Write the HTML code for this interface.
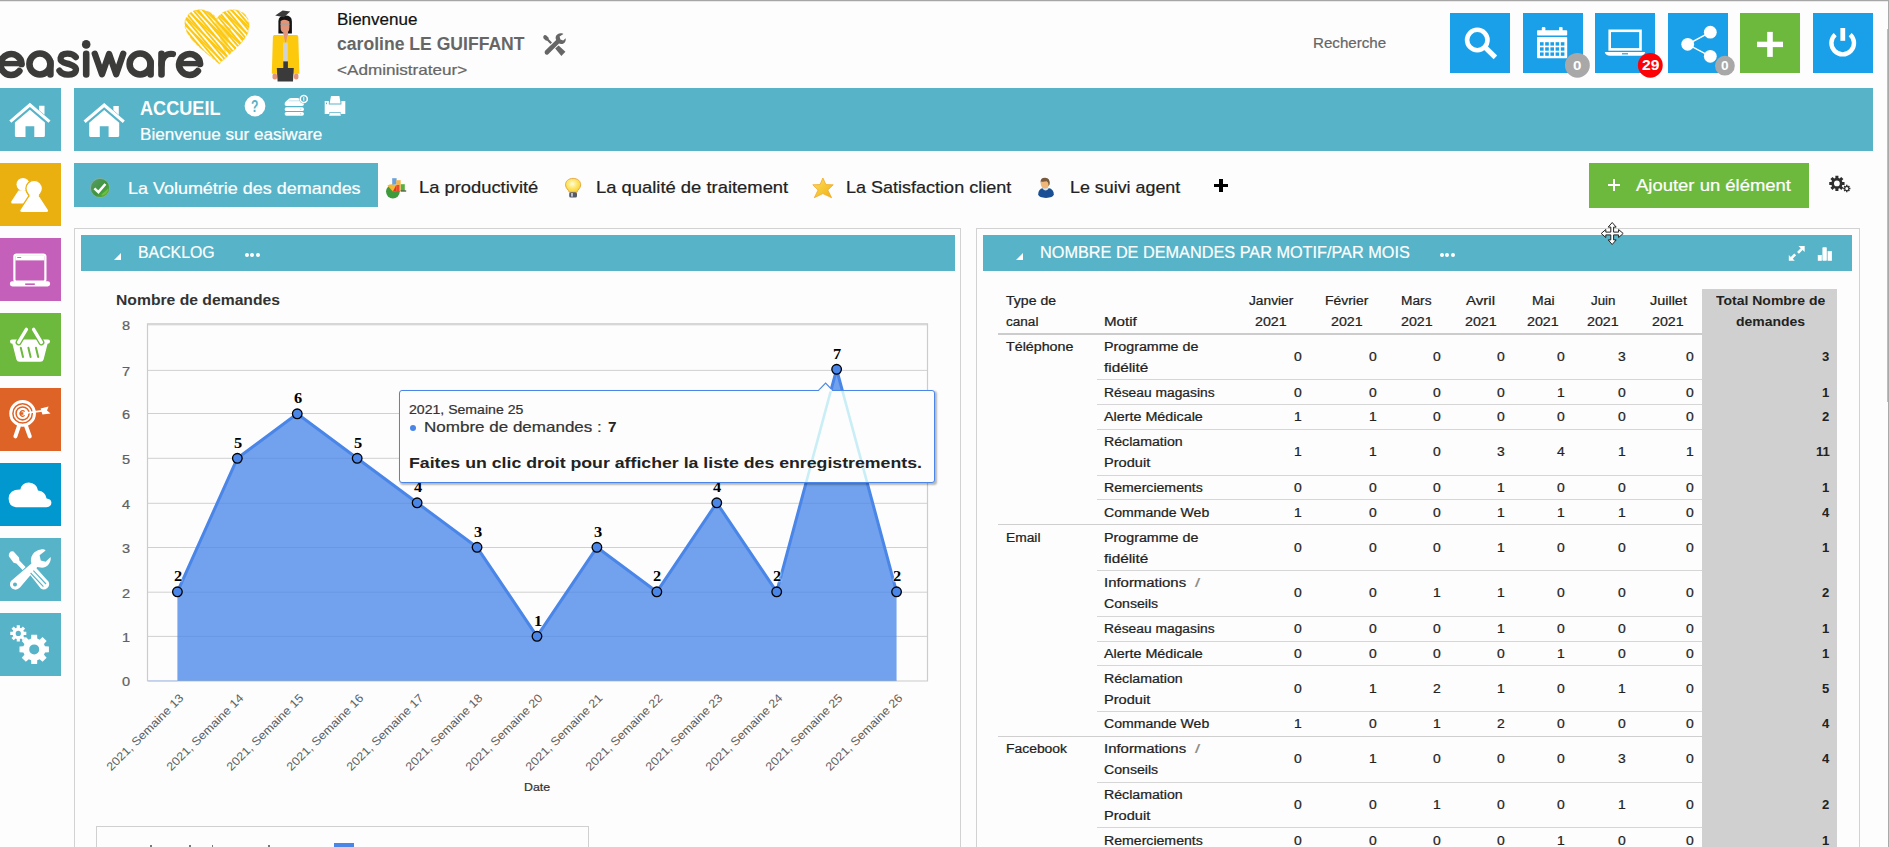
<!DOCTYPE html>
<html><head><meta charset="utf-8"><title>easiware</title>
<style>
html,body{margin:0;padding:0;width:1889px;height:847px;overflow:hidden;}
body{position:relative;background:#fdfdfd;font-family:"Liberation Sans",sans-serif;}
#root{position:absolute;left:0;top:0;width:1889px;height:847px;overflow:hidden;background:#fdfdfd;}
.t{position:absolute;white-space:nowrap;display:block;transform-origin:0 0;}
.b{position:absolute;}
svg{position:absolute;overflow:visible;}
</style></head><body><div id="root">
<div class="b" style="left:0.00px;top:0.00px;width:1889.00px;height:1.00px;background:#a6a6a6;"></div>
<div class="b" style="left:0.00px;top:1.00px;width:1889.00px;height:1.00px;background:#e9e9e9;"></div>
<div class="b" style="left:1887.50px;top:0.00px;width:0.50px;height:847.00px;background:#e2e2e2;"></div>
<div class="b" style="left:1888.00px;top:0.00px;width:1.00px;height:847.00px;background:#a9a9a9;"></div>
<div class="b" style="left:1886.60px;top:29.00px;width:0.80px;height:372.70px;background:#d4d4d4;"></div>
<div class="b" style="left:1887.00px;top:29.00px;width:1.00px;height:372.70px;background:#bdbdbd;"></div>
<span class="t" style="left:337.00px;top:10.00px;font-size:16.20px;line-height:18.00px;color:#111;font-weight:normal;font-family:'Liberation Sans';transform:scaleX(1.0514);-webkit-text-stroke:0.22px #111;">Bienvenue</span>
<span class="t" style="left:337.00px;top:34.00px;font-size:17.60px;line-height:20.00px;color:#666;font-weight:bold;font-family:'Liberation Sans';transform:scaleX(0.9992);">caroline LE GUIFFANT</span>
<span class="t" style="left:337.00px;top:62.00px;font-size:14.60px;line-height:16.00px;color:#666;font-weight:normal;font-family:'Liberation Sans';transform:scaleX(1.1720);-webkit-text-stroke:0.22px #666;">&lt;Administrateur&gt;</span>
<span class="t" style="left:1313.30px;top:34.00px;font-size:15.50px;line-height:17.00px;color:#666;font-weight:normal;font-family:'Liberation Sans';transform:scaleX(0.9765);-webkit-text-stroke:0.22px #666;">Recherche</span>
<div class="b" style="left:1450.00px;top:13.00px;width:60.00px;height:59.80px;background:#1aa0e8;"></div>
<div class="b" style="left:1523.00px;top:13.00px;width:60.00px;height:59.80px;background:#1aa0e8;"></div>
<div class="b" style="left:1595.00px;top:13.00px;width:60.00px;height:59.80px;background:#1aa0e8;"></div>
<div class="b" style="left:1668.00px;top:13.00px;width:60.00px;height:59.80px;background:#1aa0e8;"></div>
<div class="b" style="left:1740.00px;top:13.00px;width:60.00px;height:59.80px;background:#6cb93d;"></div>
<div class="b" style="left:1813.00px;top:13.00px;width:60.00px;height:59.80px;background:#1aa0e8;"></div>
<div class="b" style="left:0.00px;top:88.00px;width:61.00px;height:62.70px;background:#56b3c8;"></div>
<div class="b" style="left:0.00px;top:163.00px;width:61.00px;height:62.70px;background:#eab010;"></div>
<div class="b" style="left:0.00px;top:238.00px;width:61.00px;height:62.70px;background:#c45fba;"></div>
<div class="b" style="left:0.00px;top:313.00px;width:61.00px;height:62.70px;background:#6cb93d;"></div>
<div class="b" style="left:0.00px;top:388.00px;width:61.00px;height:62.70px;background:#dd6326;"></div>
<div class="b" style="left:0.00px;top:463.00px;width:61.00px;height:62.70px;background:#0098cf;"></div>
<div class="b" style="left:0.00px;top:538.00px;width:61.00px;height:62.70px;background:#56b3c8;"></div>
<div class="b" style="left:0.00px;top:613.00px;width:61.00px;height:62.70px;background:#56b3c8;"></div>
<div class="b" style="left:74.00px;top:88.00px;width:1799.00px;height:62.60px;background:#56b3c8;"></div>
<span class="t" style="left:140.30px;top:97.00px;font-size:19.50px;line-height:22.00px;color:#fff;font-weight:bold;font-family:'Liberation Sans';transform:scaleX(0.9288);">ACCUEIL</span>
<span class="t" style="left:140.30px;top:125.00px;font-size:16.20px;line-height:18.00px;color:#fff;font-weight:normal;font-family:'Liberation Sans';transform:scaleX(1.0555);-webkit-text-stroke:0.22px #fff;">Bienvenue sur easiware</span>
<div class="b" style="left:74.00px;top:163.00px;width:303.80px;height:43.70px;background:#56b3c8;"></div>
<span class="t" style="left:128.40px;top:179.00px;font-size:17.00px;line-height:19.00px;color:#fff;font-weight:normal;font-family:'Liberation Sans';transform:scaleX(1.0563);-webkit-text-stroke:0.22px #fff;">La Volumétrie des demandes</span>
<span class="t" style="left:418.90px;top:178.00px;font-size:17.00px;line-height:19.00px;color:#222;font-weight:normal;font-family:'Liberation Sans';transform:scaleX(1.0790);-webkit-text-stroke:0.22px #222;">La productivité</span>
<span class="t" style="left:596.40px;top:178.00px;font-size:17.00px;line-height:19.00px;color:#222;font-weight:normal;font-family:'Liberation Sans';transform:scaleX(1.0818);-webkit-text-stroke:0.22px #222;">La qualité de traitement</span>
<span class="t" style="left:846.10px;top:178.00px;font-size:17.00px;line-height:19.00px;color:#222;font-weight:normal;font-family:'Liberation Sans';transform:scaleX(1.0595);-webkit-text-stroke:0.22px #222;">La Satisfaction client</span>
<span class="t" style="left:1069.50px;top:178.00px;font-size:17.00px;line-height:19.00px;color:#222;font-weight:normal;font-family:'Liberation Sans';transform:scaleX(1.0505);-webkit-text-stroke:0.22px #222;">Le suivi agent</span>
<div class="b" style="left:1213.50px;top:183.50px;width:14.50px;height:3.50px;background:#000;"></div>
<div class="b" style="left:1219.00px;top:178.50px;width:3.50px;height:13.50px;background:#000;"></div>
<div class="b" style="left:1589.00px;top:163.00px;width:220.00px;height:45.00px;background:#6cb93d;"></div>
<div class="b" style="left:1607.50px;top:184.00px;width:12.70px;height:2.40px;background:#fff;"></div>
<div class="b" style="left:1612.70px;top:179.10px;width:2.40px;height:12.20px;background:#fff;"></div>
<span class="t" style="left:1635.90px;top:176.00px;font-size:17.00px;line-height:19.00px;color:#fff;font-weight:normal;font-family:'Liberation Sans';transform:scaleX(1.0862);-webkit-text-stroke:0.22px #fff;">Ajouter un élément</span>
<div class="b" style="left:74px;top:228px;width:886.5px;height:640px;border:1px solid #d2d2d2;box-sizing:border-box;"></div>
<div class="b" style="left:976px;top:228px;width:884px;height:640px;border:1px solid #d2d2d2;box-sizing:border-box;"></div>
<div class="b" style="left:81.00px;top:235.00px;width:874.00px;height:35.70px;background:#56b3c8;"></div>
<div class="b" style="left:983.00px;top:235.00px;width:869.00px;height:35.70px;background:#56b3c8;"></div>
<span class="t" style="left:137.80px;top:243.00px;font-size:16.50px;line-height:18.00px;color:#fff;font-weight:normal;font-family:'Liberation Sans';transform:scaleX(0.9614);-webkit-text-stroke:0.22px #fff;">BACKLOG</span>
<span class="t" style="left:1040.20px;top:243.00px;font-size:16.50px;line-height:18.00px;color:#fff;font-weight:normal;font-family:'Liberation Sans';transform:scaleX(0.9854);-webkit-text-stroke:0.22px #fff;">NOMBRE DE DEMANDES PAR MOTIF/PAR MOIS</span>
<svg style="left:114.4px;top:253.2px" width="7" height="7"><path d="M7 0V7H0Z" fill="#fff"/></svg>
<svg style="left:1016.3px;top:253.2px" width="7" height="7"><path d="M7 0V7H0Z" fill="#fff"/></svg>
<div class="b" style="left:244.60px;top:252.9px;width:4.2px;height:4.2px;border-radius:50%;background:#fff"></div>
<div class="b" style="left:250.20px;top:252.9px;width:4.2px;height:4.2px;border-radius:50%;background:#fff"></div>
<div class="b" style="left:255.80px;top:252.9px;width:4.2px;height:4.2px;border-radius:50%;background:#fff"></div>
<div class="b" style="left:1439.70px;top:252.9px;width:4.2px;height:4.2px;border-radius:50%;background:#fff"></div>
<div class="b" style="left:1445.30px;top:252.9px;width:4.2px;height:4.2px;border-radius:50%;background:#fff"></div>
<div class="b" style="left:1450.90px;top:252.9px;width:4.2px;height:4.2px;border-radius:50%;background:#fff"></div>
<span class="t" style="left:115.70px;top:291.00px;font-size:15.00px;line-height:17.00px;color:#333;font-weight:bold;font-family:'Liberation Sans';transform:scaleX(1.0465);">Nombre de demandes</span>
<svg style="left:0;top:0" width="1889" height="847" viewBox="0 0 1889 847"><line x1="147.5" x2="927.5" y1="680.80" y2="680.80" stroke="#d0d0d0" stroke-width="1"/><line x1="147.5" x2="927.5" y1="636.40" y2="636.40" stroke="#d0d0d0" stroke-width="1"/><line x1="147.5" x2="927.5" y1="592.20" y2="592.20" stroke="#d0d0d0" stroke-width="1"/><line x1="147.5" x2="927.5" y1="547.50" y2="547.50" stroke="#d0d0d0" stroke-width="1"/><line x1="147.5" x2="927.5" y1="503.30" y2="503.30" stroke="#d0d0d0" stroke-width="1"/><line x1="147.5" x2="927.5" y1="458.30" y2="458.30" stroke="#d0d0d0" stroke-width="1"/><line x1="147.5" x2="927.5" y1="413.50" y2="413.50" stroke="#d0d0d0" stroke-width="1"/><line x1="147.5" x2="927.5" y1="370.40" y2="370.40" stroke="#d0d0d0" stroke-width="1"/><line x1="147.5" x2="927.5" y1="324.80" y2="324.80" stroke="#d0d0d0" stroke-width="1"/><rect x="147.5" y="323.8" width="780.0" height="357.0" fill="none" stroke="#cccccc" stroke-width="1.2"/><line x1="148.3" x2="177.4" y1="680.90" y2="680.90" stroke="#c3d2f0" stroke-width="1.6"/><line x1="896.6" x2="926.9" y1="680.90" y2="680.90" stroke="#e6e6e6" stroke-width="1.6"/><path d="M177.40 680.80 L177.40 591.80 L237.33 458.30 L297.26 413.80 L357.19 458.30 L417.12 502.80 L477.05 547.30 L536.98 636.30 L596.91 547.30 L656.84 591.80 L716.77 502.80 L776.70 591.80 L836.63 369.30 L896.56 591.80 L896.56 680.80 Z" fill="#4a86e8" fill-opacity="0.78"/><path d="M177.40 591.80 L237.33 458.30 L297.26 413.80 L357.19 458.30 L417.12 502.80 L477.05 547.30 L536.98 636.30 L596.91 547.30 L656.84 591.80 L716.77 502.80 L776.70 591.80 L836.63 369.30 L896.56 591.80" fill="none" stroke="#4a86e8" stroke-width="3" stroke-linejoin="round"/><circle cx="177.40" cy="591.80" r="4.8" fill="#4a86e8" stroke="#000" stroke-width="1.3"/><circle cx="237.33" cy="458.30" r="4.8" fill="#4a86e8" stroke="#000" stroke-width="1.3"/><circle cx="297.26" cy="413.80" r="4.8" fill="#4a86e8" stroke="#000" stroke-width="1.3"/><circle cx="357.19" cy="458.30" r="4.8" fill="#4a86e8" stroke="#000" stroke-width="1.3"/><circle cx="417.12" cy="502.80" r="4.8" fill="#4a86e8" stroke="#000" stroke-width="1.3"/><circle cx="477.05" cy="547.30" r="4.8" fill="#4a86e8" stroke="#000" stroke-width="1.3"/><circle cx="536.98" cy="636.30" r="4.8" fill="#4a86e8" stroke="#000" stroke-width="1.3"/><circle cx="596.91" cy="547.30" r="4.8" fill="#4a86e8" stroke="#000" stroke-width="1.3"/><circle cx="656.84" cy="591.80" r="4.8" fill="#4a86e8" stroke="#000" stroke-width="1.3"/><circle cx="716.77" cy="502.80" r="4.8" fill="#4a86e8" stroke="#000" stroke-width="1.3"/><circle cx="776.70" cy="591.80" r="4.8" fill="#4a86e8" stroke="#000" stroke-width="1.3"/><circle cx="836.63" cy="369.30" r="4.8" fill="#4a86e8" stroke="#000" stroke-width="1.3"/><circle cx="896.56" cy="591.80" r="4.8" fill="#4a86e8" stroke="#000" stroke-width="1.3"/></svg>
<span class="t" style="left:121.50px;top:674.00px;font-size:13.20px;line-height:15.00px;color:#606060;font-weight:normal;font-family:'Liberation Sans';transform:scaleX(1.1033);-webkit-text-stroke:0.22px #606060;">0</span>
<span class="t" style="left:121.50px;top:630.00px;font-size:13.20px;line-height:15.00px;color:#606060;font-weight:normal;font-family:'Liberation Sans';transform:scaleX(1.1033);-webkit-text-stroke:0.22px #606060;">1</span>
<span class="t" style="left:121.50px;top:586.00px;font-size:13.20px;line-height:15.00px;color:#606060;font-weight:normal;font-family:'Liberation Sans';transform:scaleX(1.1033);-webkit-text-stroke:0.22px #606060;">2</span>
<span class="t" style="left:121.50px;top:541.00px;font-size:13.20px;line-height:15.00px;color:#606060;font-weight:normal;font-family:'Liberation Sans';transform:scaleX(1.1033);-webkit-text-stroke:0.22px #606060;">3</span>
<span class="t" style="left:121.50px;top:497.00px;font-size:13.20px;line-height:15.00px;color:#606060;font-weight:normal;font-family:'Liberation Sans';transform:scaleX(1.1033);-webkit-text-stroke:0.22px #606060;">4</span>
<span class="t" style="left:121.50px;top:452.00px;font-size:13.20px;line-height:15.00px;color:#606060;font-weight:normal;font-family:'Liberation Sans';transform:scaleX(1.1033);-webkit-text-stroke:0.22px #606060;">5</span>
<span class="t" style="left:121.50px;top:407.00px;font-size:13.20px;line-height:15.00px;color:#606060;font-weight:normal;font-family:'Liberation Sans';transform:scaleX(1.1033);-webkit-text-stroke:0.22px #606060;">6</span>
<span class="t" style="left:121.50px;top:364.00px;font-size:13.20px;line-height:15.00px;color:#606060;font-weight:normal;font-family:'Liberation Sans';transform:scaleX(1.1033);-webkit-text-stroke:0.22px #606060;">7</span>
<span class="t" style="left:121.50px;top:318.00px;font-size:13.20px;line-height:15.00px;color:#606060;font-weight:normal;font-family:'Liberation Sans';transform:scaleX(1.1033);-webkit-text-stroke:0.22px #606060;">8</span>
<span class="t" style="left:174.00px;top:568.00px;font-size:14.40px;line-height:16.00px;color:#000;font-weight:bold;font-family:'Liberation Serif';transform:scaleX(1.1389);text-shadow:0 0 2px #fff,0 0 2px #fff,0 0 1px #fff;">2</span>
<span class="t" style="left:233.93px;top:435.00px;font-size:14.40px;line-height:16.00px;color:#000;font-weight:bold;font-family:'Liberation Serif';transform:scaleX(1.1389);text-shadow:0 0 2px #fff,0 0 2px #fff,0 0 1px #fff;">5</span>
<span class="t" style="left:293.86px;top:390.00px;font-size:14.40px;line-height:16.00px;color:#000;font-weight:bold;font-family:'Liberation Serif';transform:scaleX(1.1389);text-shadow:0 0 2px #fff,0 0 2px #fff,0 0 1px #fff;">6</span>
<span class="t" style="left:353.79px;top:435.00px;font-size:14.40px;line-height:16.00px;color:#000;font-weight:bold;font-family:'Liberation Serif';transform:scaleX(1.1389);text-shadow:0 0 2px #fff,0 0 2px #fff,0 0 1px #fff;">5</span>
<span class="t" style="left:413.72px;top:479.00px;font-size:14.40px;line-height:16.00px;color:#000;font-weight:bold;font-family:'Liberation Serif';transform:scaleX(1.1389);text-shadow:0 0 2px #fff,0 0 2px #fff,0 0 1px #fff;">4</span>
<span class="t" style="left:473.65px;top:524.00px;font-size:14.40px;line-height:16.00px;color:#000;font-weight:bold;font-family:'Liberation Serif';transform:scaleX(1.1389);text-shadow:0 0 2px #fff,0 0 2px #fff,0 0 1px #fff;">3</span>
<span class="t" style="left:533.58px;top:613.00px;font-size:14.40px;line-height:16.00px;color:#000;font-weight:bold;font-family:'Liberation Serif';transform:scaleX(1.1389);text-shadow:0 0 2px #fff,0 0 2px #fff,0 0 1px #fff;">1</span>
<span class="t" style="left:593.51px;top:524.00px;font-size:14.40px;line-height:16.00px;color:#000;font-weight:bold;font-family:'Liberation Serif';transform:scaleX(1.1389);text-shadow:0 0 2px #fff,0 0 2px #fff,0 0 1px #fff;">3</span>
<span class="t" style="left:653.44px;top:568.00px;font-size:14.40px;line-height:16.00px;color:#000;font-weight:bold;font-family:'Liberation Serif';transform:scaleX(1.1389);text-shadow:0 0 2px #fff,0 0 2px #fff,0 0 1px #fff;">2</span>
<span class="t" style="left:713.37px;top:479.00px;font-size:14.40px;line-height:16.00px;color:#000;font-weight:bold;font-family:'Liberation Serif';transform:scaleX(1.1389);text-shadow:0 0 2px #fff,0 0 2px #fff,0 0 1px #fff;">4</span>
<span class="t" style="left:773.30px;top:568.00px;font-size:14.40px;line-height:16.00px;color:#000;font-weight:bold;font-family:'Liberation Serif';transform:scaleX(1.1389);text-shadow:0 0 2px #fff,0 0 2px #fff,0 0 1px #fff;">2</span>
<span class="t" style="left:833.23px;top:346.00px;font-size:14.40px;line-height:16.00px;color:#000;font-weight:bold;font-family:'Liberation Serif';transform:scaleX(1.1389);text-shadow:0 0 2px #fff,0 0 2px #fff,0 0 1px #fff;">7</span>
<span class="t" style="left:893.16px;top:568.00px;font-size:14.40px;line-height:16.00px;color:#000;font-weight:bold;font-family:'Liberation Serif';transform:scaleX(1.1389);text-shadow:0 0 2px #fff,0 0 2px #fff,0 0 1px #fff;">2</span>
<span class="t" style="left:86.84px;top:690.20px;font-size:11.60px;line-height:11.60px;color:#606060;width:94.16px;transform-origin:100% 50%;transform:rotate(-45deg) scaleX(1.0939);text-align:right;">2021, Semaine 13</span>
<span class="t" style="left:146.77px;top:690.20px;font-size:11.60px;line-height:11.60px;color:#606060;width:94.16px;transform-origin:100% 50%;transform:rotate(-45deg) scaleX(1.0939);text-align:right;">2021, Semaine 14</span>
<span class="t" style="left:206.70px;top:690.20px;font-size:11.60px;line-height:11.60px;color:#606060;width:94.16px;transform-origin:100% 50%;transform:rotate(-45deg) scaleX(1.0939);text-align:right;">2021, Semaine 15</span>
<span class="t" style="left:266.63px;top:690.20px;font-size:11.60px;line-height:11.60px;color:#606060;width:94.16px;transform-origin:100% 50%;transform:rotate(-45deg) scaleX(1.0939);text-align:right;">2021, Semaine 16</span>
<span class="t" style="left:326.56px;top:690.20px;font-size:11.60px;line-height:11.60px;color:#606060;width:94.16px;transform-origin:100% 50%;transform:rotate(-45deg) scaleX(1.0939);text-align:right;">2021, Semaine 17</span>
<span class="t" style="left:386.49px;top:690.20px;font-size:11.60px;line-height:11.60px;color:#606060;width:94.16px;transform-origin:100% 50%;transform:rotate(-45deg) scaleX(1.0939);text-align:right;">2021, Semaine 18</span>
<span class="t" style="left:446.42px;top:690.20px;font-size:11.60px;line-height:11.60px;color:#606060;width:94.16px;transform-origin:100% 50%;transform:rotate(-45deg) scaleX(1.0939);text-align:right;">2021, Semaine 20</span>
<span class="t" style="left:506.35px;top:690.20px;font-size:11.60px;line-height:11.60px;color:#606060;width:94.16px;transform-origin:100% 50%;transform:rotate(-45deg) scaleX(1.0939);text-align:right;">2021, Semaine 21</span>
<span class="t" style="left:566.28px;top:690.20px;font-size:11.60px;line-height:11.60px;color:#606060;width:94.16px;transform-origin:100% 50%;transform:rotate(-45deg) scaleX(1.0939);text-align:right;">2021, Semaine 22</span>
<span class="t" style="left:626.21px;top:690.20px;font-size:11.60px;line-height:11.60px;color:#606060;width:94.16px;transform-origin:100% 50%;transform:rotate(-45deg) scaleX(1.0939);text-align:right;">2021, Semaine 23</span>
<span class="t" style="left:686.14px;top:690.20px;font-size:11.60px;line-height:11.60px;color:#606060;width:94.16px;transform-origin:100% 50%;transform:rotate(-45deg) scaleX(1.0939);text-align:right;">2021, Semaine 24</span>
<span class="t" style="left:746.07px;top:690.20px;font-size:11.60px;line-height:11.60px;color:#606060;width:94.16px;transform-origin:100% 50%;transform:rotate(-45deg) scaleX(1.0939);text-align:right;">2021, Semaine 25</span>
<span class="t" style="left:806.00px;top:690.20px;font-size:11.60px;line-height:11.60px;color:#606060;width:94.16px;transform-origin:100% 50%;transform:rotate(-45deg) scaleX(1.0939);text-align:right;">2021, Semaine 26</span>
<span class="t" style="left:524.30px;top:781.00px;font-size:11.60px;line-height:12.00px;color:#333;font-weight:normal;font-family:'Liberation Sans';transform:scaleX(1.0652);-webkit-text-stroke:0.22px #333;">Date</span>
<div class="b" style="left:96px;top:826px;width:493px;height:60px;border:1px solid #d0d0d0;box-sizing:border-box;"></div>
<div class="b" style="left:334.00px;top:842.70px;width:20.00px;height:7.30px;background:#4a86e8;"></div>
<div class="b" style="left:150.10px;top:845.30px;width:1.50px;height:2.70px;background:#777;"></div>
<div class="b" style="left:189.10px;top:845.30px;width:1.50px;height:2.70px;background:#777;"></div>
<div class="b" style="left:211.80px;top:845.30px;width:1.50px;height:2.70px;background:#777;"></div>
<div class="b" style="left:268.30px;top:845.30px;width:1.50px;height:2.70px;background:#777;"></div>
<div class="b" style="left:399px;top:390px;width:536px;height:93px;box-sizing:border-box;border:1px solid #4a86e8;border-radius:3px;background:#fdfdfd;box-shadow:1.5px 1.5px 2px rgba(0,0,0,0.28);overflow:hidden;"><svg style="left:-400px;top:-391px" width="1889" height="847"><path d="M776.70 591.80 L836.63 369.30 L896.56 591.80" fill="none" stroke="#c9eef6" stroke-width="2.6"/></svg></div>
<svg style="left:0;top:0" width="1889" height="847"><path d="M818.3 390.6 L825.6 383.2 L832.8 390.6" fill="#fdfdfd" stroke="#4a86e8" stroke-width="1.2"/><path d="M819.4 390.5 H831.8" stroke="#fdfdfd" stroke-width="1.6"/></svg>
<span class="t" style="left:409.20px;top:402.00px;font-size:13.20px;line-height:15.00px;color:#333;font-weight:normal;font-family:'Liberation Sans';transform:scaleX(1.0677);-webkit-text-stroke:0.22px #333;">2021, Semaine 25</span>
<div class="b" style="left:409.6px;top:424.6px;width:6px;height:6px;border-radius:50%;background:#4a86e8"></div>
<span class="t" style="left:423.50px;top:418.00px;font-size:15.00px;line-height:17.00px;color:#333;font-weight:normal;font-family:'Liberation Sans';transform:scaleX(1.1341);-webkit-text-stroke:0.22px #333;">Nombre de demandes : </span>
<span class="t" style="left:607.50px;top:418.00px;font-size:15.00px;line-height:17.00px;color:#222;font-weight:bold;font-family:'Liberation Sans';transform:scaleX(1.0189);">7</span>
<span class="t" style="left:409.20px;top:454.00px;font-size:15.20px;line-height:17.00px;color:#222;font-weight:bold;font-family:'Liberation Sans';transform:scaleX(1.1666);">Faites un clic droit pour afficher la liste des enregistrements.</span>
<div class="b" style="left:1702.00px;top:288.80px;width:135.00px;height:558.20px;background:#d0d0d0;"></div>
<span class="t" style="left:1006.30px;top:294.00px;font-size:12.00px;line-height:14.00px;color:#222;font-weight:normal;font-family:'Liberation Sans';transform:scaleX(1.1733);-webkit-text-stroke:0.22px #222;">Type de</span>
<span class="t" style="left:1006.30px;top:315.00px;font-size:12.00px;line-height:14.00px;color:#222;font-weight:normal;font-family:'Liberation Sans';transform:scaleX(1.1294);-webkit-text-stroke:0.22px #222;">canal</span>
<span class="t" style="left:1104.00px;top:315.00px;font-size:12.00px;line-height:14.00px;color:#222;font-weight:normal;font-family:'Liberation Sans';transform:scaleX(1.2613);-webkit-text-stroke:0.22px #222;">Motif</span>
<span class="t" style="left:1249.05px;top:294.00px;font-size:12.00px;line-height:14.00px;color:#222;font-weight:normal;font-family:'Liberation Sans';transform:scaleX(1.1451);-webkit-text-stroke:0.22px #222;">Janvier</span>
<span class="t" style="left:1255.35px;top:315.00px;font-size:12.00px;line-height:14.00px;color:#222;font-weight:normal;font-family:'Liberation Sans';transform:scaleX(1.1874);-webkit-text-stroke:0.22px #222;">2021</span>
<span class="t" style="left:1325.35px;top:294.00px;font-size:12.00px;line-height:14.00px;color:#222;font-weight:normal;font-family:'Liberation Sans';transform:scaleX(1.1597);-webkit-text-stroke:0.22px #222;">Février</span>
<span class="t" style="left:1331.15px;top:315.00px;font-size:12.00px;line-height:14.00px;color:#222;font-weight:normal;font-family:'Liberation Sans';transform:scaleX(1.1874);-webkit-text-stroke:0.22px #222;">2021</span>
<span class="t" style="left:1401.15px;top:294.00px;font-size:12.00px;line-height:14.00px;color:#222;font-weight:normal;font-family:'Liberation Sans';transform:scaleX(1.1437);-webkit-text-stroke:0.22px #222;">Mars</span>
<span class="t" style="left:1400.55px;top:315.00px;font-size:12.00px;line-height:14.00px;color:#222;font-weight:normal;font-family:'Liberation Sans';transform:scaleX(1.1874);-webkit-text-stroke:0.22px #222;">2021</span>
<span class="t" style="left:1466.00px;top:294.00px;font-size:12.00px;line-height:14.00px;color:#222;font-weight:normal;font-family:'Liberation Sans';transform:scaleX(1.2545);-webkit-text-stroke:0.22px #222;">Avril</span>
<span class="t" style="left:1464.65px;top:315.00px;font-size:12.00px;line-height:14.00px;color:#222;font-weight:normal;font-family:'Liberation Sans';transform:scaleX(1.1874);-webkit-text-stroke:0.22px #222;">2021</span>
<span class="t" style="left:1531.55px;top:294.00px;font-size:12.00px;line-height:14.00px;color:#222;font-weight:normal;font-family:'Liberation Sans';transform:scaleX(1.1636);-webkit-text-stroke:0.22px #222;">Mai</span>
<span class="t" style="left:1526.95px;top:315.00px;font-size:12.00px;line-height:14.00px;color:#222;font-weight:normal;font-family:'Liberation Sans';transform:scaleX(1.1874);-webkit-text-stroke:0.22px #222;">2021</span>
<span class="t" style="left:1590.95px;top:294.00px;font-size:12.00px;line-height:14.00px;color:#222;font-weight:normal;font-family:'Liberation Sans';transform:scaleX(1.1129);-webkit-text-stroke:0.22px #222;">Juin</span>
<span class="t" style="left:1587.35px;top:315.00px;font-size:12.00px;line-height:14.00px;color:#222;font-weight:normal;font-family:'Liberation Sans';transform:scaleX(1.1874);-webkit-text-stroke:0.22px #222;">2021</span>
<span class="t" style="left:1649.55px;top:294.00px;font-size:12.00px;line-height:14.00px;color:#222;font-weight:normal;font-family:'Liberation Sans';transform:scaleX(1.2027);-webkit-text-stroke:0.22px #222;">Juillet</span>
<span class="t" style="left:1652.15px;top:315.00px;font-size:12.00px;line-height:14.00px;color:#222;font-weight:normal;font-family:'Liberation Sans';transform:scaleX(1.1874);-webkit-text-stroke:0.22px #222;">2021</span>
<span class="t" style="left:1715.57px;top:294.00px;font-size:12.00px;line-height:14.00px;color:#222;font-weight:bold;font-family:'Liberation Sans';transform:scaleX(1.1650);">Total Nombre de</span>
<span class="t" style="left:1735.62px;top:315.00px;font-size:12.00px;line-height:14.00px;color:#222;font-weight:bold;font-family:'Liberation Sans';transform:scaleX(1.1650);">demandes</span>
<div class="b" style="left:998.00px;top:333.00px;width:704.00px;height:2.00px;background:#cccccc;"></div>
<span class="t" style="left:1006.30px;top:340.00px;font-size:12.00px;line-height:14.00px;color:#222;font-weight:normal;font-family:'Liberation Sans';transform:scaleX(1.1884);-webkit-text-stroke:0.22px #222;">Téléphone</span>
<span class="t" style="left:1104.00px;top:340.00px;font-size:12.00px;line-height:14.00px;color:#222;font-weight:normal;font-family:'Liberation Sans';transform:scaleX(1.1894);-webkit-text-stroke:0.22px #222;">Programme de</span>
<span class="t" style="left:1104.00px;top:361.00px;font-size:12.00px;line-height:14.00px;color:#222;font-weight:normal;font-family:'Liberation Sans';transform:scaleX(1.2771);-webkit-text-stroke:0.22px #222;">fidélité</span>
<span class="t" style="left:1293.56px;top:350.00px;font-size:12.00px;line-height:14.00px;color:#222;font-weight:normal;font-family:'Liberation Sans';transform:scaleX(1.1600);-webkit-text-stroke:0.22px #222;">0</span>
<span class="t" style="left:1368.76px;top:350.00px;font-size:12.00px;line-height:14.00px;color:#222;font-weight:normal;font-family:'Liberation Sans';transform:scaleX(1.1600);-webkit-text-stroke:0.22px #222;">0</span>
<span class="t" style="left:1432.76px;top:350.00px;font-size:12.00px;line-height:14.00px;color:#222;font-weight:normal;font-family:'Liberation Sans';transform:scaleX(1.1600);-webkit-text-stroke:0.22px #222;">0</span>
<span class="t" style="left:1496.66px;top:350.00px;font-size:12.00px;line-height:14.00px;color:#222;font-weight:normal;font-family:'Liberation Sans';transform:scaleX(1.1600);-webkit-text-stroke:0.22px #222;">0</span>
<span class="t" style="left:1557.16px;top:350.00px;font-size:12.00px;line-height:14.00px;color:#222;font-weight:normal;font-family:'Liberation Sans';transform:scaleX(1.1600);-webkit-text-stroke:0.22px #222;">0</span>
<span class="t" style="left:1618.46px;top:350.00px;font-size:12.00px;line-height:14.00px;color:#222;font-weight:normal;font-family:'Liberation Sans';transform:scaleX(1.1600);-webkit-text-stroke:0.22px #222;">3</span>
<span class="t" style="left:1686.36px;top:350.00px;font-size:12.00px;line-height:14.00px;color:#222;font-weight:normal;font-family:'Liberation Sans';transform:scaleX(1.1600);-webkit-text-stroke:0.22px #222;">0</span>
<span class="t" style="left:1822.23px;top:350.00px;font-size:12.00px;line-height:14.00px;color:#222;font-weight:bold;font-family:'Liberation Sans';transform:scaleX(1.0900);">3</span>
<div class="b" style="left:1097.00px;top:379.40px;width:605.00px;height:1.00px;background:#d6d6d6;"></div>
<span class="t" style="left:1104.00px;top:386.00px;font-size:12.00px;line-height:14.00px;color:#222;font-weight:normal;font-family:'Liberation Sans';transform:scaleX(1.1514);-webkit-text-stroke:0.22px #222;">Réseau magasins</span>
<span class="t" style="left:1293.56px;top:386.00px;font-size:12.00px;line-height:14.00px;color:#222;font-weight:normal;font-family:'Liberation Sans';transform:scaleX(1.1600);-webkit-text-stroke:0.22px #222;">0</span>
<span class="t" style="left:1368.76px;top:386.00px;font-size:12.00px;line-height:14.00px;color:#222;font-weight:normal;font-family:'Liberation Sans';transform:scaleX(1.1600);-webkit-text-stroke:0.22px #222;">0</span>
<span class="t" style="left:1432.76px;top:386.00px;font-size:12.00px;line-height:14.00px;color:#222;font-weight:normal;font-family:'Liberation Sans';transform:scaleX(1.1600);-webkit-text-stroke:0.22px #222;">0</span>
<span class="t" style="left:1496.66px;top:386.00px;font-size:12.00px;line-height:14.00px;color:#222;font-weight:normal;font-family:'Liberation Sans';transform:scaleX(1.1600);-webkit-text-stroke:0.22px #222;">0</span>
<span class="t" style="left:1557.16px;top:386.00px;font-size:12.00px;line-height:14.00px;color:#222;font-weight:normal;font-family:'Liberation Sans';transform:scaleX(1.1600);-webkit-text-stroke:0.22px #222;">1</span>
<span class="t" style="left:1618.46px;top:386.00px;font-size:12.00px;line-height:14.00px;color:#222;font-weight:normal;font-family:'Liberation Sans';transform:scaleX(1.1600);-webkit-text-stroke:0.22px #222;">0</span>
<span class="t" style="left:1686.36px;top:386.00px;font-size:12.00px;line-height:14.00px;color:#222;font-weight:normal;font-family:'Liberation Sans';transform:scaleX(1.1600);-webkit-text-stroke:0.22px #222;">0</span>
<span class="t" style="left:1822.23px;top:386.00px;font-size:12.00px;line-height:14.00px;color:#222;font-weight:bold;font-family:'Liberation Sans';transform:scaleX(1.0900);">1</span>
<div class="b" style="left:1097.00px;top:404.15px;width:605.00px;height:1.00px;background:#d6d6d6;"></div>
<span class="t" style="left:1104.00px;top:410.00px;font-size:12.00px;line-height:14.00px;color:#222;font-weight:normal;font-family:'Liberation Sans';transform:scaleX(1.1946);-webkit-text-stroke:0.22px #222;">Alerte Médicale</span>
<span class="t" style="left:1293.56px;top:410.00px;font-size:12.00px;line-height:14.00px;color:#222;font-weight:normal;font-family:'Liberation Sans';transform:scaleX(1.1600);-webkit-text-stroke:0.22px #222;">1</span>
<span class="t" style="left:1368.76px;top:410.00px;font-size:12.00px;line-height:14.00px;color:#222;font-weight:normal;font-family:'Liberation Sans';transform:scaleX(1.1600);-webkit-text-stroke:0.22px #222;">1</span>
<span class="t" style="left:1432.76px;top:410.00px;font-size:12.00px;line-height:14.00px;color:#222;font-weight:normal;font-family:'Liberation Sans';transform:scaleX(1.1600);-webkit-text-stroke:0.22px #222;">0</span>
<span class="t" style="left:1496.66px;top:410.00px;font-size:12.00px;line-height:14.00px;color:#222;font-weight:normal;font-family:'Liberation Sans';transform:scaleX(1.1600);-webkit-text-stroke:0.22px #222;">0</span>
<span class="t" style="left:1557.16px;top:410.00px;font-size:12.00px;line-height:14.00px;color:#222;font-weight:normal;font-family:'Liberation Sans';transform:scaleX(1.1600);-webkit-text-stroke:0.22px #222;">0</span>
<span class="t" style="left:1618.46px;top:410.00px;font-size:12.00px;line-height:14.00px;color:#222;font-weight:normal;font-family:'Liberation Sans';transform:scaleX(1.1600);-webkit-text-stroke:0.22px #222;">0</span>
<span class="t" style="left:1686.36px;top:410.00px;font-size:12.00px;line-height:14.00px;color:#222;font-weight:normal;font-family:'Liberation Sans';transform:scaleX(1.1600);-webkit-text-stroke:0.22px #222;">0</span>
<span class="t" style="left:1822.23px;top:410.00px;font-size:12.00px;line-height:14.00px;color:#222;font-weight:bold;font-family:'Liberation Sans';transform:scaleX(1.0900);">2</span>
<div class="b" style="left:1097.00px;top:428.90px;width:605.00px;height:1.00px;background:#d6d6d6;"></div>
<span class="t" style="left:1104.00px;top:435.00px;font-size:12.00px;line-height:14.00px;color:#222;font-weight:normal;font-family:'Liberation Sans';transform:scaleX(1.1799);-webkit-text-stroke:0.22px #222;">Réclamation</span>
<span class="t" style="left:1104.00px;top:456.00px;font-size:12.00px;line-height:14.00px;color:#222;font-weight:normal;font-family:'Liberation Sans';transform:scaleX(1.2151);-webkit-text-stroke:0.22px #222;">Produit</span>
<span class="t" style="left:1293.56px;top:445.00px;font-size:12.00px;line-height:14.00px;color:#222;font-weight:normal;font-family:'Liberation Sans';transform:scaleX(1.1600);-webkit-text-stroke:0.22px #222;">1</span>
<span class="t" style="left:1368.76px;top:445.00px;font-size:12.00px;line-height:14.00px;color:#222;font-weight:normal;font-family:'Liberation Sans';transform:scaleX(1.1600);-webkit-text-stroke:0.22px #222;">1</span>
<span class="t" style="left:1432.76px;top:445.00px;font-size:12.00px;line-height:14.00px;color:#222;font-weight:normal;font-family:'Liberation Sans';transform:scaleX(1.1600);-webkit-text-stroke:0.22px #222;">0</span>
<span class="t" style="left:1496.66px;top:445.00px;font-size:12.00px;line-height:14.00px;color:#222;font-weight:normal;font-family:'Liberation Sans';transform:scaleX(1.1600);-webkit-text-stroke:0.22px #222;">3</span>
<span class="t" style="left:1557.16px;top:445.00px;font-size:12.00px;line-height:14.00px;color:#222;font-weight:normal;font-family:'Liberation Sans';transform:scaleX(1.1600);-webkit-text-stroke:0.22px #222;">4</span>
<span class="t" style="left:1618.46px;top:445.00px;font-size:12.00px;line-height:14.00px;color:#222;font-weight:normal;font-family:'Liberation Sans';transform:scaleX(1.1600);-webkit-text-stroke:0.22px #222;">1</span>
<span class="t" style="left:1686.36px;top:445.00px;font-size:12.00px;line-height:14.00px;color:#222;font-weight:normal;font-family:'Liberation Sans';transform:scaleX(1.1600);-webkit-text-stroke:0.22px #222;">1</span>
<span class="t" style="left:1815.67px;top:445.00px;font-size:12.00px;line-height:14.00px;color:#222;font-weight:bold;font-family:'Liberation Sans';transform:scaleX(1.0900);">11</span>
<div class="b" style="left:1097.00px;top:474.70px;width:605.00px;height:1.00px;background:#d6d6d6;"></div>
<span class="t" style="left:1104.00px;top:481.00px;font-size:12.00px;line-height:14.00px;color:#222;font-weight:normal;font-family:'Liberation Sans';transform:scaleX(1.1758);-webkit-text-stroke:0.22px #222;">Remerciements</span>
<span class="t" style="left:1293.56px;top:481.00px;font-size:12.00px;line-height:14.00px;color:#222;font-weight:normal;font-family:'Liberation Sans';transform:scaleX(1.1600);-webkit-text-stroke:0.22px #222;">0</span>
<span class="t" style="left:1368.76px;top:481.00px;font-size:12.00px;line-height:14.00px;color:#222;font-weight:normal;font-family:'Liberation Sans';transform:scaleX(1.1600);-webkit-text-stroke:0.22px #222;">0</span>
<span class="t" style="left:1432.76px;top:481.00px;font-size:12.00px;line-height:14.00px;color:#222;font-weight:normal;font-family:'Liberation Sans';transform:scaleX(1.1600);-webkit-text-stroke:0.22px #222;">0</span>
<span class="t" style="left:1496.66px;top:481.00px;font-size:12.00px;line-height:14.00px;color:#222;font-weight:normal;font-family:'Liberation Sans';transform:scaleX(1.1600);-webkit-text-stroke:0.22px #222;">1</span>
<span class="t" style="left:1557.16px;top:481.00px;font-size:12.00px;line-height:14.00px;color:#222;font-weight:normal;font-family:'Liberation Sans';transform:scaleX(1.1600);-webkit-text-stroke:0.22px #222;">0</span>
<span class="t" style="left:1618.46px;top:481.00px;font-size:12.00px;line-height:14.00px;color:#222;font-weight:normal;font-family:'Liberation Sans';transform:scaleX(1.1600);-webkit-text-stroke:0.22px #222;">0</span>
<span class="t" style="left:1686.36px;top:481.00px;font-size:12.00px;line-height:14.00px;color:#222;font-weight:normal;font-family:'Liberation Sans';transform:scaleX(1.1600);-webkit-text-stroke:0.22px #222;">0</span>
<span class="t" style="left:1822.23px;top:481.00px;font-size:12.00px;line-height:14.00px;color:#222;font-weight:bold;font-family:'Liberation Sans';transform:scaleX(1.0900);">1</span>
<div class="b" style="left:1097.00px;top:499.45px;width:605.00px;height:1.00px;background:#d6d6d6;"></div>
<span class="t" style="left:1104.00px;top:506.00px;font-size:12.00px;line-height:14.00px;color:#222;font-weight:normal;font-family:'Liberation Sans';transform:scaleX(1.1712);-webkit-text-stroke:0.22px #222;">Commande Web</span>
<span class="t" style="left:1293.56px;top:506.00px;font-size:12.00px;line-height:14.00px;color:#222;font-weight:normal;font-family:'Liberation Sans';transform:scaleX(1.1600);-webkit-text-stroke:0.22px #222;">1</span>
<span class="t" style="left:1368.76px;top:506.00px;font-size:12.00px;line-height:14.00px;color:#222;font-weight:normal;font-family:'Liberation Sans';transform:scaleX(1.1600);-webkit-text-stroke:0.22px #222;">0</span>
<span class="t" style="left:1432.76px;top:506.00px;font-size:12.00px;line-height:14.00px;color:#222;font-weight:normal;font-family:'Liberation Sans';transform:scaleX(1.1600);-webkit-text-stroke:0.22px #222;">0</span>
<span class="t" style="left:1496.66px;top:506.00px;font-size:12.00px;line-height:14.00px;color:#222;font-weight:normal;font-family:'Liberation Sans';transform:scaleX(1.1600);-webkit-text-stroke:0.22px #222;">1</span>
<span class="t" style="left:1557.16px;top:506.00px;font-size:12.00px;line-height:14.00px;color:#222;font-weight:normal;font-family:'Liberation Sans';transform:scaleX(1.1600);-webkit-text-stroke:0.22px #222;">1</span>
<span class="t" style="left:1618.46px;top:506.00px;font-size:12.00px;line-height:14.00px;color:#222;font-weight:normal;font-family:'Liberation Sans';transform:scaleX(1.1600);-webkit-text-stroke:0.22px #222;">1</span>
<span class="t" style="left:1686.36px;top:506.00px;font-size:12.00px;line-height:14.00px;color:#222;font-weight:normal;font-family:'Liberation Sans';transform:scaleX(1.1600);-webkit-text-stroke:0.22px #222;">0</span>
<span class="t" style="left:1822.23px;top:506.00px;font-size:12.00px;line-height:14.00px;color:#222;font-weight:bold;font-family:'Liberation Sans';transform:scaleX(1.0900);">4</span>
<div class="b" style="left:998.00px;top:523.90px;width:704.00px;height:1.50px;background:#cfcfcf;"></div>
<span class="t" style="left:1006.30px;top:531.00px;font-size:12.00px;line-height:14.00px;color:#222;font-weight:normal;font-family:'Liberation Sans';transform:scaleX(1.1497);-webkit-text-stroke:0.22px #222;">Email</span>
<span class="t" style="left:1104.00px;top:531.00px;font-size:12.00px;line-height:14.00px;color:#222;font-weight:normal;font-family:'Liberation Sans';transform:scaleX(1.1894);-webkit-text-stroke:0.22px #222;">Programme de</span>
<span class="t" style="left:1104.00px;top:552.00px;font-size:12.00px;line-height:14.00px;color:#222;font-weight:normal;font-family:'Liberation Sans';transform:scaleX(1.2771);-webkit-text-stroke:0.22px #222;">fidélité</span>
<span class="t" style="left:1293.56px;top:541.00px;font-size:12.00px;line-height:14.00px;color:#222;font-weight:normal;font-family:'Liberation Sans';transform:scaleX(1.1600);-webkit-text-stroke:0.22px #222;">0</span>
<span class="t" style="left:1368.76px;top:541.00px;font-size:12.00px;line-height:14.00px;color:#222;font-weight:normal;font-family:'Liberation Sans';transform:scaleX(1.1600);-webkit-text-stroke:0.22px #222;">0</span>
<span class="t" style="left:1432.76px;top:541.00px;font-size:12.00px;line-height:14.00px;color:#222;font-weight:normal;font-family:'Liberation Sans';transform:scaleX(1.1600);-webkit-text-stroke:0.22px #222;">0</span>
<span class="t" style="left:1496.66px;top:541.00px;font-size:12.00px;line-height:14.00px;color:#222;font-weight:normal;font-family:'Liberation Sans';transform:scaleX(1.1600);-webkit-text-stroke:0.22px #222;">1</span>
<span class="t" style="left:1557.16px;top:541.00px;font-size:12.00px;line-height:14.00px;color:#222;font-weight:normal;font-family:'Liberation Sans';transform:scaleX(1.1600);-webkit-text-stroke:0.22px #222;">0</span>
<span class="t" style="left:1618.46px;top:541.00px;font-size:12.00px;line-height:14.00px;color:#222;font-weight:normal;font-family:'Liberation Sans';transform:scaleX(1.1600);-webkit-text-stroke:0.22px #222;">0</span>
<span class="t" style="left:1686.36px;top:541.00px;font-size:12.00px;line-height:14.00px;color:#222;font-weight:normal;font-family:'Liberation Sans';transform:scaleX(1.1600);-webkit-text-stroke:0.22px #222;">0</span>
<span class="t" style="left:1822.23px;top:541.00px;font-size:12.00px;line-height:14.00px;color:#222;font-weight:bold;font-family:'Liberation Sans';transform:scaleX(1.0900);">1</span>
<div class="b" style="left:1097.00px;top:570.00px;width:605.00px;height:1.00px;background:#d6d6d6;"></div>
<span class="t" style="left:1104.00px;top:576.00px;font-size:12.00px;line-height:14.00px;color:#222;font-weight:normal;font-family:'Liberation Sans';transform:scaleX(1.2434);-webkit-text-stroke:0.22px #222;">Informations</span>
<span class="t" style="left:1194.60px;top:576.00px;font-size:12.00px;line-height:14.00px;color:#888;font-weight:normal;font-family:'Liberation Sans';transform:scaleX(1.4998);-webkit-text-stroke:0.22px #888;">/</span>
<span class="t" style="left:1104.00px;top:597.00px;font-size:12.00px;line-height:14.00px;color:#222;font-weight:normal;font-family:'Liberation Sans';transform:scaleX(1.1756);-webkit-text-stroke:0.22px #222;">Conseils</span>
<span class="t" style="left:1293.56px;top:586.00px;font-size:12.00px;line-height:14.00px;color:#222;font-weight:normal;font-family:'Liberation Sans';transform:scaleX(1.1600);-webkit-text-stroke:0.22px #222;">0</span>
<span class="t" style="left:1368.76px;top:586.00px;font-size:12.00px;line-height:14.00px;color:#222;font-weight:normal;font-family:'Liberation Sans';transform:scaleX(1.1600);-webkit-text-stroke:0.22px #222;">0</span>
<span class="t" style="left:1432.76px;top:586.00px;font-size:12.00px;line-height:14.00px;color:#222;font-weight:normal;font-family:'Liberation Sans';transform:scaleX(1.1600);-webkit-text-stroke:0.22px #222;">1</span>
<span class="t" style="left:1496.66px;top:586.00px;font-size:12.00px;line-height:14.00px;color:#222;font-weight:normal;font-family:'Liberation Sans';transform:scaleX(1.1600);-webkit-text-stroke:0.22px #222;">1</span>
<span class="t" style="left:1557.16px;top:586.00px;font-size:12.00px;line-height:14.00px;color:#222;font-weight:normal;font-family:'Liberation Sans';transform:scaleX(1.1600);-webkit-text-stroke:0.22px #222;">0</span>
<span class="t" style="left:1618.46px;top:586.00px;font-size:12.00px;line-height:14.00px;color:#222;font-weight:normal;font-family:'Liberation Sans';transform:scaleX(1.1600);-webkit-text-stroke:0.22px #222;">0</span>
<span class="t" style="left:1686.36px;top:586.00px;font-size:12.00px;line-height:14.00px;color:#222;font-weight:normal;font-family:'Liberation Sans';transform:scaleX(1.1600);-webkit-text-stroke:0.22px #222;">0</span>
<span class="t" style="left:1822.23px;top:586.00px;font-size:12.00px;line-height:14.00px;color:#222;font-weight:bold;font-family:'Liberation Sans';transform:scaleX(1.0900);">2</span>
<div class="b" style="left:1097.00px;top:615.80px;width:605.00px;height:1.00px;background:#d6d6d6;"></div>
<span class="t" style="left:1104.00px;top:622.00px;font-size:12.00px;line-height:14.00px;color:#222;font-weight:normal;font-family:'Liberation Sans';transform:scaleX(1.1514);-webkit-text-stroke:0.22px #222;">Réseau magasins</span>
<span class="t" style="left:1293.56px;top:622.00px;font-size:12.00px;line-height:14.00px;color:#222;font-weight:normal;font-family:'Liberation Sans';transform:scaleX(1.1600);-webkit-text-stroke:0.22px #222;">0</span>
<span class="t" style="left:1368.76px;top:622.00px;font-size:12.00px;line-height:14.00px;color:#222;font-weight:normal;font-family:'Liberation Sans';transform:scaleX(1.1600);-webkit-text-stroke:0.22px #222;">0</span>
<span class="t" style="left:1432.76px;top:622.00px;font-size:12.00px;line-height:14.00px;color:#222;font-weight:normal;font-family:'Liberation Sans';transform:scaleX(1.1600);-webkit-text-stroke:0.22px #222;">0</span>
<span class="t" style="left:1496.66px;top:622.00px;font-size:12.00px;line-height:14.00px;color:#222;font-weight:normal;font-family:'Liberation Sans';transform:scaleX(1.1600);-webkit-text-stroke:0.22px #222;">1</span>
<span class="t" style="left:1557.16px;top:622.00px;font-size:12.00px;line-height:14.00px;color:#222;font-weight:normal;font-family:'Liberation Sans';transform:scaleX(1.1600);-webkit-text-stroke:0.22px #222;">0</span>
<span class="t" style="left:1618.46px;top:622.00px;font-size:12.00px;line-height:14.00px;color:#222;font-weight:normal;font-family:'Liberation Sans';transform:scaleX(1.1600);-webkit-text-stroke:0.22px #222;">0</span>
<span class="t" style="left:1686.36px;top:622.00px;font-size:12.00px;line-height:14.00px;color:#222;font-weight:normal;font-family:'Liberation Sans';transform:scaleX(1.1600);-webkit-text-stroke:0.22px #222;">0</span>
<span class="t" style="left:1822.23px;top:622.00px;font-size:12.00px;line-height:14.00px;color:#222;font-weight:bold;font-family:'Liberation Sans';transform:scaleX(1.0900);">1</span>
<div class="b" style="left:1097.00px;top:640.55px;width:605.00px;height:1.00px;background:#d6d6d6;"></div>
<span class="t" style="left:1104.00px;top:647.00px;font-size:12.00px;line-height:14.00px;color:#222;font-weight:normal;font-family:'Liberation Sans';transform:scaleX(1.1946);-webkit-text-stroke:0.22px #222;">Alerte Médicale</span>
<span class="t" style="left:1293.56px;top:647.00px;font-size:12.00px;line-height:14.00px;color:#222;font-weight:normal;font-family:'Liberation Sans';transform:scaleX(1.1600);-webkit-text-stroke:0.22px #222;">0</span>
<span class="t" style="left:1368.76px;top:647.00px;font-size:12.00px;line-height:14.00px;color:#222;font-weight:normal;font-family:'Liberation Sans';transform:scaleX(1.1600);-webkit-text-stroke:0.22px #222;">0</span>
<span class="t" style="left:1432.76px;top:647.00px;font-size:12.00px;line-height:14.00px;color:#222;font-weight:normal;font-family:'Liberation Sans';transform:scaleX(1.1600);-webkit-text-stroke:0.22px #222;">0</span>
<span class="t" style="left:1496.66px;top:647.00px;font-size:12.00px;line-height:14.00px;color:#222;font-weight:normal;font-family:'Liberation Sans';transform:scaleX(1.1600);-webkit-text-stroke:0.22px #222;">0</span>
<span class="t" style="left:1557.16px;top:647.00px;font-size:12.00px;line-height:14.00px;color:#222;font-weight:normal;font-family:'Liberation Sans';transform:scaleX(1.1600);-webkit-text-stroke:0.22px #222;">1</span>
<span class="t" style="left:1618.46px;top:647.00px;font-size:12.00px;line-height:14.00px;color:#222;font-weight:normal;font-family:'Liberation Sans';transform:scaleX(1.1600);-webkit-text-stroke:0.22px #222;">0</span>
<span class="t" style="left:1686.36px;top:647.00px;font-size:12.00px;line-height:14.00px;color:#222;font-weight:normal;font-family:'Liberation Sans';transform:scaleX(1.1600);-webkit-text-stroke:0.22px #222;">0</span>
<span class="t" style="left:1822.23px;top:647.00px;font-size:12.00px;line-height:14.00px;color:#222;font-weight:bold;font-family:'Liberation Sans';transform:scaleX(1.0900);">1</span>
<div class="b" style="left:1097.00px;top:665.30px;width:605.00px;height:1.00px;background:#d6d6d6;"></div>
<span class="t" style="left:1104.00px;top:672.00px;font-size:12.00px;line-height:14.00px;color:#222;font-weight:normal;font-family:'Liberation Sans';transform:scaleX(1.1799);-webkit-text-stroke:0.22px #222;">Réclamation</span>
<span class="t" style="left:1104.00px;top:693.00px;font-size:12.00px;line-height:14.00px;color:#222;font-weight:normal;font-family:'Liberation Sans';transform:scaleX(1.2151);-webkit-text-stroke:0.22px #222;">Produit</span>
<span class="t" style="left:1293.56px;top:682.00px;font-size:12.00px;line-height:14.00px;color:#222;font-weight:normal;font-family:'Liberation Sans';transform:scaleX(1.1600);-webkit-text-stroke:0.22px #222;">0</span>
<span class="t" style="left:1368.76px;top:682.00px;font-size:12.00px;line-height:14.00px;color:#222;font-weight:normal;font-family:'Liberation Sans';transform:scaleX(1.1600);-webkit-text-stroke:0.22px #222;">1</span>
<span class="t" style="left:1432.76px;top:682.00px;font-size:12.00px;line-height:14.00px;color:#222;font-weight:normal;font-family:'Liberation Sans';transform:scaleX(1.1600);-webkit-text-stroke:0.22px #222;">2</span>
<span class="t" style="left:1496.66px;top:682.00px;font-size:12.00px;line-height:14.00px;color:#222;font-weight:normal;font-family:'Liberation Sans';transform:scaleX(1.1600);-webkit-text-stroke:0.22px #222;">1</span>
<span class="t" style="left:1557.16px;top:682.00px;font-size:12.00px;line-height:14.00px;color:#222;font-weight:normal;font-family:'Liberation Sans';transform:scaleX(1.1600);-webkit-text-stroke:0.22px #222;">0</span>
<span class="t" style="left:1618.46px;top:682.00px;font-size:12.00px;line-height:14.00px;color:#222;font-weight:normal;font-family:'Liberation Sans';transform:scaleX(1.1600);-webkit-text-stroke:0.22px #222;">1</span>
<span class="t" style="left:1686.36px;top:682.00px;font-size:12.00px;line-height:14.00px;color:#222;font-weight:normal;font-family:'Liberation Sans';transform:scaleX(1.1600);-webkit-text-stroke:0.22px #222;">0</span>
<span class="t" style="left:1822.23px;top:682.00px;font-size:12.00px;line-height:14.00px;color:#222;font-weight:bold;font-family:'Liberation Sans';transform:scaleX(1.0900);">5</span>
<div class="b" style="left:1097.00px;top:711.10px;width:605.00px;height:1.00px;background:#d6d6d6;"></div>
<span class="t" style="left:1104.00px;top:717.00px;font-size:12.00px;line-height:14.00px;color:#222;font-weight:normal;font-family:'Liberation Sans';transform:scaleX(1.1712);-webkit-text-stroke:0.22px #222;">Commande Web</span>
<span class="t" style="left:1293.56px;top:717.00px;font-size:12.00px;line-height:14.00px;color:#222;font-weight:normal;font-family:'Liberation Sans';transform:scaleX(1.1600);-webkit-text-stroke:0.22px #222;">1</span>
<span class="t" style="left:1368.76px;top:717.00px;font-size:12.00px;line-height:14.00px;color:#222;font-weight:normal;font-family:'Liberation Sans';transform:scaleX(1.1600);-webkit-text-stroke:0.22px #222;">0</span>
<span class="t" style="left:1432.76px;top:717.00px;font-size:12.00px;line-height:14.00px;color:#222;font-weight:normal;font-family:'Liberation Sans';transform:scaleX(1.1600);-webkit-text-stroke:0.22px #222;">1</span>
<span class="t" style="left:1496.66px;top:717.00px;font-size:12.00px;line-height:14.00px;color:#222;font-weight:normal;font-family:'Liberation Sans';transform:scaleX(1.1600);-webkit-text-stroke:0.22px #222;">2</span>
<span class="t" style="left:1557.16px;top:717.00px;font-size:12.00px;line-height:14.00px;color:#222;font-weight:normal;font-family:'Liberation Sans';transform:scaleX(1.1600);-webkit-text-stroke:0.22px #222;">0</span>
<span class="t" style="left:1618.46px;top:717.00px;font-size:12.00px;line-height:14.00px;color:#222;font-weight:normal;font-family:'Liberation Sans';transform:scaleX(1.1600);-webkit-text-stroke:0.22px #222;">0</span>
<span class="t" style="left:1686.36px;top:717.00px;font-size:12.00px;line-height:14.00px;color:#222;font-weight:normal;font-family:'Liberation Sans';transform:scaleX(1.1600);-webkit-text-stroke:0.22px #222;">0</span>
<span class="t" style="left:1822.23px;top:717.00px;font-size:12.00px;line-height:14.00px;color:#222;font-weight:bold;font-family:'Liberation Sans';transform:scaleX(1.0900);">4</span>
<div class="b" style="left:998.00px;top:735.55px;width:704.00px;height:1.50px;background:#cfcfcf;"></div>
<span class="t" style="left:1006.30px;top:742.00px;font-size:12.00px;line-height:14.00px;color:#222;font-weight:normal;font-family:'Liberation Sans';transform:scaleX(1.1575);-webkit-text-stroke:0.22px #222;">Facebook</span>
<span class="t" style="left:1104.00px;top:742.00px;font-size:12.00px;line-height:14.00px;color:#222;font-weight:normal;font-family:'Liberation Sans';transform:scaleX(1.2434);-webkit-text-stroke:0.22px #222;">Informations</span>
<span class="t" style="left:1194.60px;top:742.00px;font-size:12.00px;line-height:14.00px;color:#888;font-weight:normal;font-family:'Liberation Sans';transform:scaleX(1.4998);-webkit-text-stroke:0.22px #888;">/</span>
<span class="t" style="left:1104.00px;top:763.00px;font-size:12.00px;line-height:14.00px;color:#222;font-weight:normal;font-family:'Liberation Sans';transform:scaleX(1.1756);-webkit-text-stroke:0.22px #222;">Conseils</span>
<span class="t" style="left:1293.56px;top:752.00px;font-size:12.00px;line-height:14.00px;color:#222;font-weight:normal;font-family:'Liberation Sans';transform:scaleX(1.1600);-webkit-text-stroke:0.22px #222;">0</span>
<span class="t" style="left:1368.76px;top:752.00px;font-size:12.00px;line-height:14.00px;color:#222;font-weight:normal;font-family:'Liberation Sans';transform:scaleX(1.1600);-webkit-text-stroke:0.22px #222;">1</span>
<span class="t" style="left:1432.76px;top:752.00px;font-size:12.00px;line-height:14.00px;color:#222;font-weight:normal;font-family:'Liberation Sans';transform:scaleX(1.1600);-webkit-text-stroke:0.22px #222;">0</span>
<span class="t" style="left:1496.66px;top:752.00px;font-size:12.00px;line-height:14.00px;color:#222;font-weight:normal;font-family:'Liberation Sans';transform:scaleX(1.1600);-webkit-text-stroke:0.22px #222;">0</span>
<span class="t" style="left:1557.16px;top:752.00px;font-size:12.00px;line-height:14.00px;color:#222;font-weight:normal;font-family:'Liberation Sans';transform:scaleX(1.1600);-webkit-text-stroke:0.22px #222;">0</span>
<span class="t" style="left:1618.46px;top:752.00px;font-size:12.00px;line-height:14.00px;color:#222;font-weight:normal;font-family:'Liberation Sans';transform:scaleX(1.1600);-webkit-text-stroke:0.22px #222;">3</span>
<span class="t" style="left:1686.36px;top:752.00px;font-size:12.00px;line-height:14.00px;color:#222;font-weight:normal;font-family:'Liberation Sans';transform:scaleX(1.1600);-webkit-text-stroke:0.22px #222;">0</span>
<span class="t" style="left:1822.23px;top:752.00px;font-size:12.00px;line-height:14.00px;color:#222;font-weight:bold;font-family:'Liberation Sans';transform:scaleX(1.0900);">4</span>
<div class="b" style="left:1097.00px;top:781.65px;width:605.00px;height:1.00px;background:#d6d6d6;"></div>
<span class="t" style="left:1104.00px;top:788.00px;font-size:12.00px;line-height:14.00px;color:#222;font-weight:normal;font-family:'Liberation Sans';transform:scaleX(1.1799);-webkit-text-stroke:0.22px #222;">Réclamation</span>
<span class="t" style="left:1104.00px;top:809.00px;font-size:12.00px;line-height:14.00px;color:#222;font-weight:normal;font-family:'Liberation Sans';transform:scaleX(1.2151);-webkit-text-stroke:0.22px #222;">Produit</span>
<span class="t" style="left:1293.56px;top:798.00px;font-size:12.00px;line-height:14.00px;color:#222;font-weight:normal;font-family:'Liberation Sans';transform:scaleX(1.1600);-webkit-text-stroke:0.22px #222;">0</span>
<span class="t" style="left:1368.76px;top:798.00px;font-size:12.00px;line-height:14.00px;color:#222;font-weight:normal;font-family:'Liberation Sans';transform:scaleX(1.1600);-webkit-text-stroke:0.22px #222;">0</span>
<span class="t" style="left:1432.76px;top:798.00px;font-size:12.00px;line-height:14.00px;color:#222;font-weight:normal;font-family:'Liberation Sans';transform:scaleX(1.1600);-webkit-text-stroke:0.22px #222;">1</span>
<span class="t" style="left:1496.66px;top:798.00px;font-size:12.00px;line-height:14.00px;color:#222;font-weight:normal;font-family:'Liberation Sans';transform:scaleX(1.1600);-webkit-text-stroke:0.22px #222;">0</span>
<span class="t" style="left:1557.16px;top:798.00px;font-size:12.00px;line-height:14.00px;color:#222;font-weight:normal;font-family:'Liberation Sans';transform:scaleX(1.1600);-webkit-text-stroke:0.22px #222;">0</span>
<span class="t" style="left:1618.46px;top:798.00px;font-size:12.00px;line-height:14.00px;color:#222;font-weight:normal;font-family:'Liberation Sans';transform:scaleX(1.1600);-webkit-text-stroke:0.22px #222;">1</span>
<span class="t" style="left:1686.36px;top:798.00px;font-size:12.00px;line-height:14.00px;color:#222;font-weight:normal;font-family:'Liberation Sans';transform:scaleX(1.1600);-webkit-text-stroke:0.22px #222;">0</span>
<span class="t" style="left:1822.23px;top:798.00px;font-size:12.00px;line-height:14.00px;color:#222;font-weight:bold;font-family:'Liberation Sans';transform:scaleX(1.0900);">2</span>
<div class="b" style="left:1097.00px;top:827.45px;width:605.00px;height:1.00px;background:#d6d6d6;"></div>
<span class="t" style="left:1104.00px;top:834.00px;font-size:12.00px;line-height:14.00px;color:#222;font-weight:normal;font-family:'Liberation Sans';transform:scaleX(1.1758);-webkit-text-stroke:0.22px #222;">Remerciements</span>
<span class="t" style="left:1293.56px;top:834.00px;font-size:12.00px;line-height:14.00px;color:#222;font-weight:normal;font-family:'Liberation Sans';transform:scaleX(1.1600);-webkit-text-stroke:0.22px #222;">0</span>
<span class="t" style="left:1368.76px;top:834.00px;font-size:12.00px;line-height:14.00px;color:#222;font-weight:normal;font-family:'Liberation Sans';transform:scaleX(1.1600);-webkit-text-stroke:0.22px #222;">0</span>
<span class="t" style="left:1432.76px;top:834.00px;font-size:12.00px;line-height:14.00px;color:#222;font-weight:normal;font-family:'Liberation Sans';transform:scaleX(1.1600);-webkit-text-stroke:0.22px #222;">0</span>
<span class="t" style="left:1496.66px;top:834.00px;font-size:12.00px;line-height:14.00px;color:#222;font-weight:normal;font-family:'Liberation Sans';transform:scaleX(1.1600);-webkit-text-stroke:0.22px #222;">0</span>
<span class="t" style="left:1557.16px;top:834.00px;font-size:12.00px;line-height:14.00px;color:#222;font-weight:normal;font-family:'Liberation Sans';transform:scaleX(1.1600);-webkit-text-stroke:0.22px #222;">1</span>
<span class="t" style="left:1618.46px;top:834.00px;font-size:12.00px;line-height:14.00px;color:#222;font-weight:normal;font-family:'Liberation Sans';transform:scaleX(1.1600);-webkit-text-stroke:0.22px #222;">0</span>
<span class="t" style="left:1686.36px;top:834.00px;font-size:12.00px;line-height:14.00px;color:#222;font-weight:normal;font-family:'Liberation Sans';transform:scaleX(1.1600);-webkit-text-stroke:0.22px #222;">0</span>
<span class="t" style="left:1822.23px;top:834.00px;font-size:12.00px;line-height:14.00px;color:#222;font-weight:bold;font-family:'Liberation Sans';transform:scaleX(1.0900);">1</span>
<div class="b" style="left:1097.00px;top:852.20px;width:605.00px;height:1.00px;background:#d6d6d6;"></div>
<svg style="left:0;top:0" width="1889" height="847" viewBox="0 0 1889 847"><defs><clipPath id="hc"><path d="M219.3 63.8 C206 52 186.5 39 185 25.5 C184 15 193.5 8.2 203 10 C210 11.5 214.8 15.5 217 19.2 C220 13.5 227.5 8.6 235.5 10 C244.5 11.5 250.3 19 248.8 28.5 C246.5 42 230.5 52 219.3 63.8 Z"/></clipPath><pattern id="hp" width="3.7" height="8" patternUnits="userSpaceOnUse" patternTransform="rotate(-40)"><rect x="0" y="0" width="1.9" height="8" fill="#fdc80e"/></pattern><pattern id="hp2" width="6.1" height="8" patternUnits="userSpaceOnUse" patternTransform="rotate(-46)"><rect x="0" y="0" width="1.7" height="8" fill="#fdc80e"/></pattern><clipPath id="cl0"><rect x="0" y="0" width="400" height="100"/></clipPath></defs><g clip-path="url(#cl0)"><path d="M21.60 64 A10.5 10.5 0 1 0 19.40 71.00" fill="none" stroke="#3b3b3a" stroke-width="6.6" stroke-linecap="round"/><path d="M1.10 63.6 H21.60" stroke="#3b3b3a" stroke-width="5.4" stroke-linecap="butt"/><circle cx="39.90" cy="64" r="10.5" fill="none" stroke="#3b3b3a" stroke-width="6.6"/><path d="M50.40 62 V74.5" stroke="#3b3b3a" stroke-width="6.6" stroke-linecap="round"/><path d="M75.8 57.2 C72.5 52.6 61.5 52.2 60.6 58 C59.8 63.2 66.5 63.2 69.5 64.2 C74.5 65.8 77 68 75.6 71.4 C73.5 76 62.5 75.8 59.4 70.6" fill="none" stroke="#3b3b3a" stroke-width="6.3" stroke-linecap="round"/><path d="M86.2 53.8 V74.5" stroke="#3b3b3a" stroke-width="6.6" stroke-linecap="round"/><circle cx="86.2" cy="44.4" r="4.3" fill="#3b3b3a"/><path d="M94.8 53.8 L102 74.3 L109.1 54 L116.2 74.3 L123.2 53.8" fill="none" stroke="#3b3b3a" stroke-width="6.4" stroke-linecap="round" stroke-linejoin="round"/><circle cx="140.10" cy="64" r="10.5" fill="none" stroke="#3b3b3a" stroke-width="6.6"/><path d="M150.60 62 V74.5" stroke="#3b3b3a" stroke-width="6.6" stroke-linecap="round"/><path d="M161.5 53.8 V74.5" stroke="#3b3b3a" stroke-width="6.6" stroke-linecap="round"/><path d="M161.5 65 C161.5 57 166.5 53 173 54" fill="none" stroke="#3b3b3a" stroke-width="6.2" stroke-linecap="round"/><path d="M200.10 64 A10.5 10.5 0 1 0 197.90 71.00" fill="none" stroke="#3b3b3a" stroke-width="6.6" stroke-linecap="round"/><path d="M179.60 63.6 H200.10" stroke="#3b3b3a" stroke-width="5.4" stroke-linecap="butt"/></g><g clip-path="url(#hc)"><rect x="180" y="5" width="75" height="62" fill="url(#hp)"/><rect x="180" y="5" width="75" height="62" fill="url(#hp2)"/><path d="M215 22 L225 54 L231 28 Z" fill="#fdc80e" opacity="0.55"/></g><path d="M219.3 63.8 C206 52 186.5 39 185 25.5 C184 15 193.5 8.2 203 10 C210 11.5 214.8 15.5 217 19.2 C220 13.5 227.5 8.6 235.5 10 C244.5 11.5 250.3 19 248.8 28.5 C246.5 42 230.5 52 219.3 63.8 Z" fill="none" stroke="#fdc80e" stroke-width="1.1" opacity="0.55" stroke-dasharray="5 2 3 1.5 7 2.5"/><g><path d="M278.4 33.6 V21.5 Q278.4 15.6 285.2 15.6 Q291.9 15.6 291.9 21.5 V33.6 Z" fill="#141414"/><path d="M280.6 21 Q285 18.5 289.4 21.5 V27.5 Q289.4 32.8 285 32.8 Q280.6 32.8 280.6 27.5 Z" fill="#e3957a"/><rect x="280.4" y="23.2" width="9.2" height="2.2" rx="1.1" fill="#a9a39d" opacity="0.75"/><rect x="283.4" y="31" width="4.6" height="12" fill="#e3957a"/><path d="M275.2 15.6 L282.6 10.6 L290.2 11.6 L284 17.2 Z" fill="#3a3a3a"/><path d="M274.4 35 H283.6 L285.6 44 L287.6 35 H296.8 Q298.2 35 298.3 37 L299.4 73.8 H271.8 L272.9 37 Q273 35 274.4 35Z" fill="#fdc90d"/><rect x="283" y="42.6" width="4.8" height="19" fill="#d2d2d2"/><rect x="283.3" y="61.4" width="4.6" height="8" fill="#3a3a3a"/><rect x="272.5" y="73.6" width="4.6" height="5.8" rx="2" fill="#e3957a"/><rect x="294" y="73.6" width="4.4" height="5.8" rx="2" fill="#e3957a"/><path d="M276.8 68 H293.8 L293 81.4 H277.6 Z" fill="#3a3a3a"/></g><g fill="#666" stroke="none"><path d="M545.3 50.6 L556.2 40 C554.6 36.8 556.6 33.6 560.6 33.2 C562 33.1 563 33.5 563.4 34 L559.6 36.6 L560.4 39.6 L563.2 40.6 L565.6 38.2 C566.4 41 564.2 44.3 561 44 L559 43.6 L548.2 54.2 Q546.4 55.4 545 53.8 Q544 52.2 545.3 50.6 Z"/><path d="M543.4 36.2 Q544.4 34.4 546.4 35.4 L548.6 37.8 L548.8 39.2 L552 42.4 L550.4 44 L547.2 40.8 L545.8 40.6 L543.6 38.4 Q543 37.2 543.4 36.2Z"/><path d="M555.2 48.6 L558.6 45.4 L565.4 51.8 L561.4 56 Z"/></g><circle cx="1477.3" cy="40" r="10.2" fill="none" stroke="#fff" stroke-width="4.6"/><path d="M1485.4 47.6 L1495.4 57.4" stroke="#fff" stroke-width="5" stroke-linecap="butt"/><g fill="#fff"><rect x="1541.8" y="27" width="3.6" height="5" rx="1"/><rect x="1559" y="27" width="3.6" height="5" rx="1"/><rect x="1537" y="30.2" width="30.2" height="5.4" rx="0.8"/><rect x="1537" y="37" width="30.2" height="21.2" rx="0.8"/></g><rect x="1540.00" y="42.20" width="3.6" height="3.4" fill="#1aa0e8"/><rect x="1545.20" y="42.20" width="3.6" height="3.4" fill="#1aa0e8"/><rect x="1550.40" y="42.20" width="3.6" height="3.4" fill="#1aa0e8"/><rect x="1555.60" y="42.20" width="3.6" height="3.4" fill="#1aa0e8"/><rect x="1560.80" y="42.20" width="3.6" height="3.4" fill="#1aa0e8"/><rect x="1540.00" y="47.30" width="3.6" height="3.4" fill="#1aa0e8"/><rect x="1545.20" y="47.30" width="3.6" height="3.4" fill="#1aa0e8"/><rect x="1550.40" y="47.30" width="3.6" height="3.4" fill="#1aa0e8"/><rect x="1555.60" y="47.30" width="3.6" height="3.4" fill="#1aa0e8"/><rect x="1560.80" y="47.30" width="3.6" height="3.4" fill="#1aa0e8"/><rect x="1540.00" y="52.40" width="3.6" height="3.4" fill="#1aa0e8"/><rect x="1545.20" y="52.40" width="3.6" height="3.4" fill="#1aa0e8"/><rect x="1550.40" y="52.40" width="3.6" height="3.4" fill="#1aa0e8"/><rect x="1555.60" y="52.40" width="3.6" height="3.4" fill="#1aa0e8"/><rect x="1560.80" y="52.40" width="3.6" height="3.4" fill="#1aa0e8"/><rect x="1609.7" y="30.8" width="30.8" height="18.6" fill="none" stroke="#fff" stroke-width="2.6"/><path d="M1604.8 52 H1645.2 Q1644.4 55.8 1640 55.8 H1610 Q1605.6 55.8 1604.8 52Z" fill="#fff"/><rect x="1622" y="53.2" width="6" height="1.2" fill="#1aa0e8"/><path d="M1710.3 32.2 L1687.7 44.3 L1710.3 56.3" fill="none" stroke="#fff" stroke-width="1.5"/><circle cx="1710.3" cy="32.2" r="6.4" fill="#fff"/><circle cx="1687.7" cy="44.3" r="6.4" fill="#fff"/><circle cx="1710.3" cy="56.3" r="6.4" fill="#fff"/><rect x="1757" y="41.7" width="26" height="5.4" fill="#fff"/><rect x="1767.2" y="31.9" width="5.6" height="25" fill="#fff"/><path d="M1835.2 34.6 A11.3 11.3 0 1 0 1850.2 34.6" fill="none" stroke="#fff" stroke-width="4.4"/><rect x="1840.4" y="28" width="4.8" height="12.8" fill="#fff"/><circle cx="1577.4" cy="65.3" r="12.4" fill="#a8a8a8"/><circle cx="1650.3" cy="65.3" r="12.4" fill="#fb0207"/><circle cx="1724.9" cy="65.7" r="9.9" fill="#a8a8a8"/><g transform="translate(8.90 102.20) scale(1.0000)"><path d="M21 0.6 L41.6 18.2 L39.6 20.6 L21 4.9 L2.4 20.6 L0.4 18.2 Z" fill="#fff"/><path d="M30.2 3.6 H35.6 V12.6 L30.2 8 Z" fill="#fff"/><path d="M21 7.6 L36 20.4 V33.2 Q36 34.8 34.4 34.8 H25.4 V24 H16.6 V34.8 H7.6 Q6 34.8 6 33.2 V20.4 Z" fill="#fff"/></g><g transform="translate(83.20 102.30) scale(1.0000)"><path d="M21 0.6 L41.6 18.2 L39.6 20.6 L21 4.9 L2.4 20.6 L0.4 18.2 Z" fill="#fff"/><path d="M30.2 3.6 H35.6 V12.6 L30.2 8 Z" fill="#fff"/><path d="M21 7.6 L36 20.4 V33.2 Q36 34.8 34.4 34.8 H25.4 V24 H16.6 V34.8 H7.6 Q6 34.8 6 33.2 V20.4 Z" fill="#fff"/></g><g fill="#fff"><circle cx="23" cy="184.4" r="6.5"/><path d="M18.4 190.6 L11.3 201.4 Q10.8 203.6 13 203.6 H25 L29 197 L25.6 190.6 Z"/></g><g fill="#fff" stroke="#eab010" stroke-width="1.3"><path d="M28.6 196.4 L19.8 209.8 Q19.2 212.6 22 212.6 H46.4 Q49.2 212.6 48.6 209.8 L39.8 196.4 Z"/><circle cx="34.2" cy="188.6" r="8.3"/></g><rect x="29.5" y="194" width="9.4" height="4" fill="#fff"/><rect x="14.4" y="254.6" width="31" height="27" rx="2" fill="none" stroke="#fff" stroke-width="2.2"/><rect x="15.4" y="255.4" width="29" height="5" fill="#fff"/><rect x="17.2" y="257" width="4" height="0.9" fill="#c45fba"/><rect x="9.9" y="281.2" width="40.2" height="5.2" rx="2.4" fill="#fff"/><rect x="25.2" y="283.4" width="9.6" height="1.6" fill="#c45fba"/><path d="M12 339.6 H48 Q50.2 339.6 50 341.8 Q49.8 343.6 47.6 343.8 L43.6 359.4 Q43 361.8 40.4 361.8 H19.6 Q17 361.8 16.4 359.4 L12.4 343.8 Q10.2 343.6 10 341.8 Q9.8 339.6 12 339.6Z" fill="#fff"/><g stroke="#6cb93d" stroke-width="2" stroke-linecap="round"><path d="M20.8 347.8 L23 357"/><path d="M28.4 347.8 L30.6 357"/><path d="M36 347.8 L38.2 357"/></g><clipPath id="bk"><rect x="9" y="338.6" width="42" height="9"/></clipPath><g clip-path="url(#bk)" stroke="#6cb93d" stroke-width="6" stroke-linecap="round" fill="none"><path d="M26.4 329.4 L18.6 342.4"/><path d="M33.6 329.4 L41.4 342.4"/></g><g stroke="#fff" stroke-width="3.4" stroke-linecap="round" fill="none"><path d="M26.4 329.4 L18.6 342.4"/><path d="M33.6 329.4 L41.4 342.4"/></g><g fill="none" stroke="#fff"><circle cx="22.6" cy="413.4" r="11.9" stroke-width="2.9"/><circle cx="22.6" cy="413.4" r="8.1" stroke-width="1.7"/></g><circle cx="22.6" cy="413.4" r="5.7" fill="#fff"/><path d="M24.6 411.6 A2.6 2.8 0 1 0 24.6 415.4 M19.6 412.8 H23.4 M19.6 414.2 H23.4" stroke="#dd6326" stroke-width="1.2" fill="none"/><path d="M25 413.2 L42 410.8" stroke="#fff" stroke-width="1.8"/><path d="M40.6 408.6 L48.6 406.4 L47 410.4 L50.6 413.6 L42.4 414.6 Z" fill="#fff"/><g stroke="#fff" stroke-width="4" stroke-linecap="round"><path d="M18.8 426.4 L15.4 436.4"/><path d="M26.2 426.4 L29.8 436.4"/></g><path d="M15.8 507.2 H46.6 Q51.4 507 51.4 502.6 Q51.2 498.8 46.6 498.4 Q45.4 491.2 38 490.4 Q36.6 483 28.8 482.6 Q21.6 483 20.4 489.6 Q9 489.4 8.6 498.6 Q8.8 506.6 15.8 507.2Z" fill="#fff"/><g fill="#fff" stroke="none"><path d="M31.4 563.4 C29.4 557 33.6 550.2 41 549.4 C43.4 549.2 45 549.8 45.6 550.4 L39.6 555.2 L40.8 560.4 L45.6 561.8 L50.6 557 C51.6 562.4 47 568.6 40.4 567.6 L37.4 567 L20 587.6 Q16.4 591.2 12 588.6 Q8.4 585.2 11 581 Z"/><path d="M9.2 553.4 Q10.2 550.4 13.6 551.4 L19 557.6 L19.4 560.6 L25.6 567 L22.6 570 L16.4 563.4 L13.6 562.8 L9 556.6 Q8.4 555 9.2 553.4Z"/><path d="M27.6 571.8 L34 565.6 L48.4 581.4 Q50.4 584.6 47.4 588 Q44 590.8 40.8 588.6 Z"/></g><circle cx="15" cy="584.4" r="2" fill="#56b3c8"/><g stroke="#56b3c8" stroke-width="1.1"><path d="M30.6 573 L43.4 586.6"/><path d="M33.4 570.6 L46 584"/></g><path d="M26.34 631.80 L26.34 635.00 L23.88 634.97 L23.36 636.23 L25.12 637.96 L22.86 640.22 L21.13 638.46 L19.87 638.98 L19.90 641.44 L16.70 641.44 L16.73 638.98 L15.47 638.46 L13.74 640.22 L11.48 637.96 L13.24 636.23 L12.72 634.97 L10.26 635.00 L10.26 631.80 L12.72 631.83 L13.24 630.57 L11.48 628.84 L13.74 626.58 L15.47 628.34 L16.73 627.82 L16.70 625.36 L19.90 625.36 L19.87 627.82 L21.13 628.34 L22.86 626.58 L25.12 628.84 L23.36 630.57 L23.88 631.83Z M15.70 633.40 a2.60 2.60 0 1 0 5.20 0 a2.60 2.60 0 1 0 -5.20 0Z" fill="#fff" fill-rule="evenodd"/><path d="M48.91 646.47 L48.91 652.33 L44.98 652.44 L43.97 654.87 L46.67 657.73 L42.53 661.87 L39.67 659.17 L37.24 660.18 L37.13 664.11 L31.27 664.11 L31.16 660.18 L28.73 659.17 L25.87 661.87 L21.73 657.73 L24.43 654.87 L23.42 652.44 L19.49 652.33 L19.49 646.47 L23.42 646.36 L24.43 643.93 L21.73 641.07 L25.87 636.93 L28.73 639.63 L31.16 638.62 L31.27 634.69 L37.13 634.69 L37.24 638.62 L39.67 639.63 L42.53 636.93 L46.67 641.07 L43.97 643.93 L44.98 646.36Z M29.20 649.40 a5.00 5.00 0 1 0 10.00 0 a5.00 5.00 0 1 0 -10.00 0Z" fill="#fff" fill-rule="evenodd"/><circle cx="255" cy="106" r="10.4" fill="#fff"/><g fill="#fff"><path d="M286.4 105.9 Q284.6 105.9 284.6 104.2 Q284.6 102.2 286 101.2 L289.2 98.6 Q290 98 291.2 98 H297.4 Q298.6 98 299.6 98.8 L302.6 101.2 Q303.9 102.2 303.9 104.2 Q303.9 105.9 302 105.9 Z"/><rect x="284.7" y="107.2" width="19.2" height="3.9" rx="1.7"/><rect x="284.7" y="111.9" width="19.2" height="3.9" rx="1.7"/></g><rect x="288.6" y="100.3" width="11.4" height="1" fill="#56b3c8" opacity="0.35"/><rect x="300" y="108.7" width="1.2" height="0.9" fill="#56b3c8" opacity="0.5"/><rect x="300" y="113.4" width="1.2" height="0.9" fill="#56b3c8" opacity="0.5"/><circle cx="303.8" cy="98.9" r="4.6" fill="#56b3c8"/><circle cx="303.8" cy="98.9" r="3.5" fill="none" stroke="#fff" stroke-width="1.5"/><rect x="303.3" y="97.1" width="1" height="3.6" fill="#fff"/><g fill="#fff"><path d="M331 96 H339.4 L340.6 103.4 H329.6 Z"/><path d="M324.7 101 H328.8 V104.6 H341.4 V101 H345.3 V114 H340.6 V112 H329.4 V114 H324.7 Z"/><path d="M330 112.8 H340 L340.9 115.7 H329.1 Z"/></g><rect x="326" y="102.6" width="1" height="1.6" fill="#56b3c8"/><defs><linearGradient id="gck" x1="0" y1="0" x2="1" y2="1"><stop offset="0" stop-color="#5a9e66"/><stop offset="0.55" stop-color="#3f9440"/><stop offset="1" stop-color="#5fbd3a"/></linearGradient><radialGradient id="gbulb" cx="0.45" cy="0.4" r="0.6"><stop offset="0" stop-color="#fffbe0"/><stop offset="0.5" stop-color="#fde870"/><stop offset="1" stop-color="#fbd030"/></radialGradient><linearGradient id="gstar" x1="0" y1="0" x2="1" y2="1"><stop offset="0" stop-color="#fde060"/><stop offset="1" stop-color="#f0b010"/></linearGradient></defs><circle cx="100.05" cy="188" r="9.6" fill="url(#gck)" stroke="#8fb2a0" stroke-width="0.8"/><path d="M103 195.6 Q108 193 108.4 188.4 L101 195 Z" fill="#6cc23e"/><path d="M94.4 188.4 L98.4 192.2 L105.4 184" fill="none" stroke="#fff" stroke-width="2.6"/><circle cx="392.9" cy="191.6" r="6.9" fill="#3f9a3c"/><path d="M392.9 191.6 L387.4 185.6 Q391 183.2 396.2 185 L399.8 191.6 Z" fill="#f7b733"/><path d="M392.9 191.6 L396.2 185 L399.8 191.6 Z" fill="#e8302a"/><rect x="392.2" y="178.2" width="4.4" height="6.4" fill="#6aa2dc"/><rect x="396.3" y="180.2" width="4.4" height="10.8" fill="#f5b445"/><rect x="396.4" y="185" width="3" height="6.4" fill="#e8302a" opacity="0.8"/><rect x="400.8" y="184.2" width="4" height="6.6" fill="#58b040"/><rect x="400.6" y="190.4" width="5.6" height="1.2" fill="#444"/><path d="M573.1 178.4 C578 178.4 580.7 181.4 580.7 184.8 C580.7 188.4 577.4 189.8 577 192.2 H569.2 C568.8 189.8 565.5 188.4 565.5 184.8 C565.5 181.4 568.2 178.4 573.1 178.4Z" fill="url(#gbulb)" stroke="#e3a338" stroke-width="0.9"/><rect x="569.2" y="192.2" width="7.8" height="5.4" rx="1.6" fill="#555a64"/><rect x="571" y="193" width="2" height="3.6" fill="#b9bdd0"/><path d="M822.9 178 L825.9 184.6 L833.2 184.8 L827.8 190 L831.6 197.7 L822.9 193.6 L814.3 197.7 L818.1 190 L812.8 184.8 L820 184.6 Z" fill="url(#gstar)" stroke="#f2a72a" stroke-width="0.8" stroke-linejoin="round"/><path d="M1038.2 194.6 Q1038.2 189 1043 188 H1048.6 Q1053.8 189 1053.8 194.6 Q1053 197.9 1046 197.9 Q1039 197.9 1038.2 194.6Z" fill="#1b4f93"/><path d="M1042.4 188.6 Q1045.6 192.4 1048.8 188.6 L1047.6 187 H1043.6 Z" fill="#cfe7f0"/><ellipse cx="1045" cy="183.6" rx="4.3" ry="5" fill="#f0b878"/><path d="M1040.6 183 Q1040 177.6 1045.2 177.8 Q1050.4 178 1049.6 184.6 L1048.4 186 Q1048.8 182.2 1046.6 181.2 Q1043 182 1041.2 181.4 Z" fill="#7a5a3c"/><path d="M1844.55 181.88 L1844.55 184.92 L1842.29 184.92 L1841.79 186.14 L1843.39 187.73 L1841.23 189.89 L1839.64 188.29 L1838.42 188.79 L1838.42 191.05 L1835.38 191.05 L1835.38 188.79 L1834.16 188.29 L1832.57 189.89 L1830.41 187.73 L1832.01 186.14 L1831.51 184.92 L1829.25 184.92 L1829.25 181.88 L1831.51 181.88 L1832.01 180.66 L1830.41 179.07 L1832.57 176.91 L1834.16 178.51 L1835.38 178.01 L1835.38 175.75 L1838.42 175.75 L1838.42 178.01 L1839.64 178.51 L1841.23 176.91 L1843.39 179.07 L1841.79 180.66 L1842.29 181.88Z M1834.00 183.40 a2.90 2.90 0 1 0 5.80 0 a2.90 2.90 0 1 0 -5.80 0Z" fill="#2e2e2e" fill-rule="evenodd"/><path d="M1850.43 187.78 L1850.43 189.22 L1849.40 189.23 L1849.16 189.82 L1849.88 190.56 L1848.86 191.58 L1848.12 190.86 L1847.53 191.10 L1847.52 192.13 L1846.08 192.13 L1846.07 191.10 L1845.48 190.86 L1844.74 191.58 L1843.72 190.56 L1844.44 189.82 L1844.20 189.23 L1843.17 189.22 L1843.17 187.78 L1844.20 187.77 L1844.44 187.18 L1843.72 186.44 L1844.74 185.42 L1845.48 186.14 L1846.07 185.90 L1846.08 184.87 L1847.52 184.87 L1847.53 185.90 L1848.12 186.14 L1848.86 185.42 L1849.88 186.44 L1849.16 187.18 L1849.40 187.77Z M1845.30 188.50 a1.50 1.50 0 1 0 3.00 0 a1.50 1.50 0 1 0 -3.00 0Z" fill="#2e2e2e" fill-rule="evenodd"/><g fill="#fff"><path d="M1798.5 246.1 H1804.7 V252 Z"/><path d="M1788.8 255 V260.8 H1794.8 Z"/></g><g stroke="#fff" stroke-width="2.6"><path d="M1802.6 248.2 L1798 252.8"/><path d="M1790.8 258.8 L1795.2 254.4"/></g><g fill="#fff"><rect x="1817.8" y="255" width="4" height="5.8"/><rect x="1822.4" y="247.2" width="4.4" height="13.6" rx="0.8"/><rect x="1827.6" y="251.1" width="4.3" height="9.7"/></g><g transform="translate(1612.2 233.5)"><path d="M0 -11 L4 -6.4 H1.4 V-1.4 H6.4 V-4 L11 0 L6.4 4 V1.4 H1.4 V6.4 H4 L0 11 L-4 6.4 H-1.4 V1.4 H-6.4 V4 L-11 0 L-6.4 -4 V-1.4 H-1.4 V-6.4 H-4 Z" fill="#fff" stroke="#222" stroke-width="1" stroke-linejoin="miter"/></g></svg>
<span class="t" style="left:1573.20px;top:58.00px;font-size:13.50px;line-height:15.00px;color:#fff;font-weight:bold;font-family:'Liberation Sans';transform:scaleX(1.1188);">0</span>
<span class="t" style="left:1641.60px;top:57.00px;font-size:14.00px;line-height:16.00px;color:#fff;font-weight:bold;font-family:'Liberation Sans';transform:scaleX(1.1173);">29</span>
<span class="t" style="left:1721.20px;top:59.00px;font-size:12.50px;line-height:14.00px;color:#fff;font-weight:bold;font-family:'Liberation Sans';transform:scaleX(1.0932);">0</span>
<span class="t" style="left:251.00px;top:97.00px;font-size:16.50px;line-height:18.00px;color:#56b3c8;font-weight:bold;font-family:'Liberation Sans';transform:scaleX(0.7342);">?</span>
</div></body></html>
